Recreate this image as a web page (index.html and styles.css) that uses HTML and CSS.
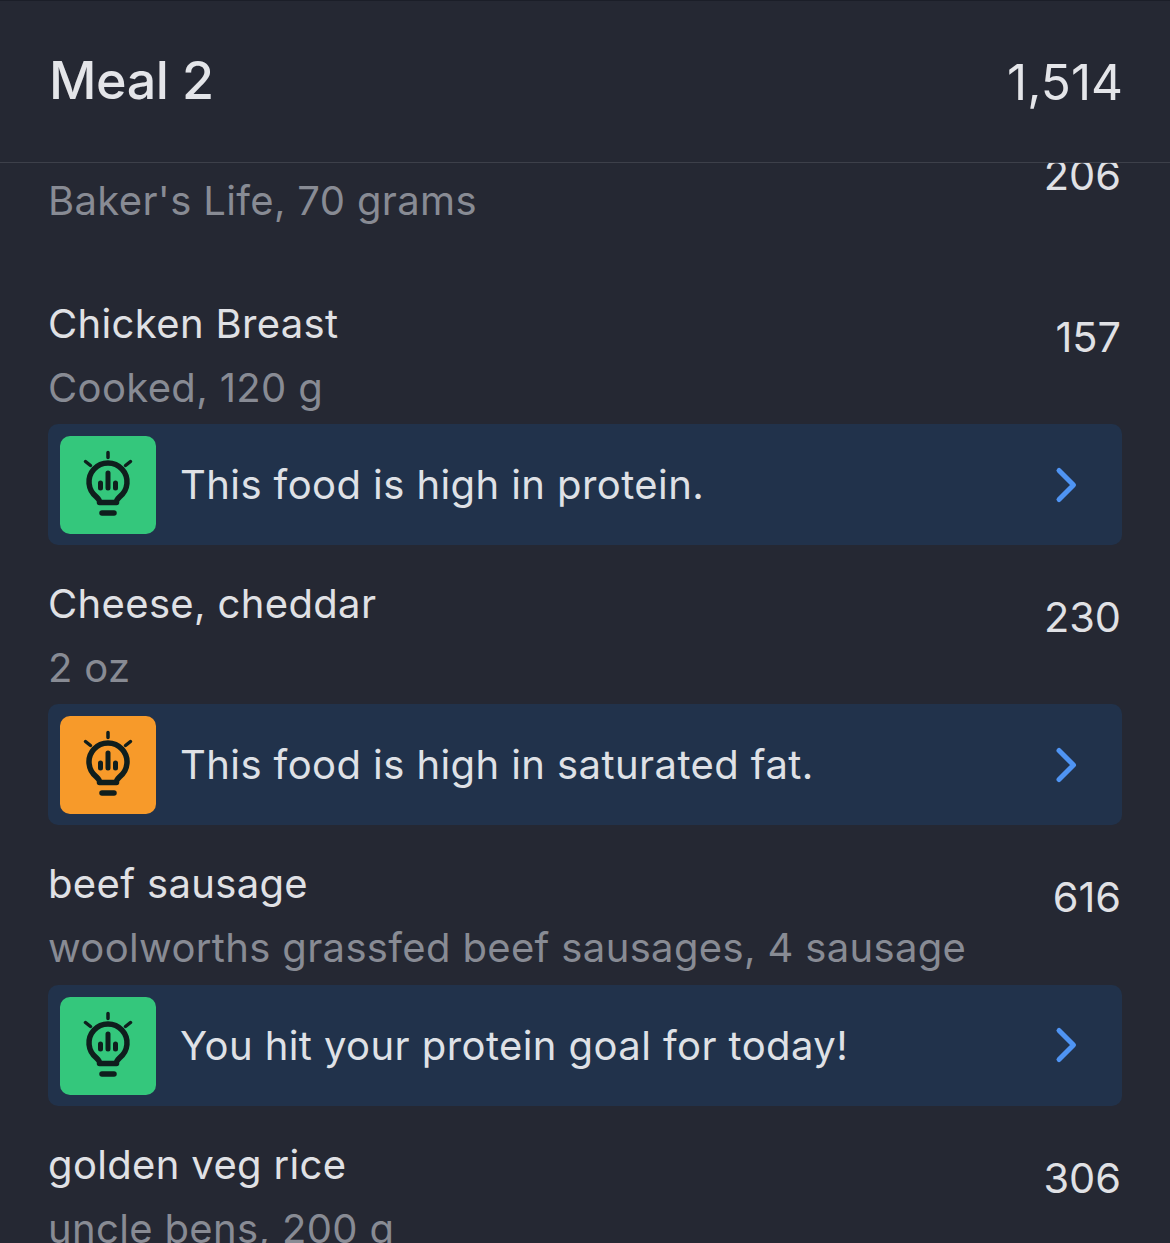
FILE: index.html
```html
<!DOCTYPE html>
<html lang="en">
<head>
  <meta charset="UTF-8" />
  <title>Meal 2</title>
  <link rel="stylesheet" href="styles.css">
</head>
<body>
  <svg class="defs" width="0" height="0">
    <symbol id="bulb" viewBox="0 0 96 98">
      <g fill="none" stroke="#0f1e1d" stroke-linecap="round" stroke-linejoin="round">
        <path stroke-width="3.500" d="M48 16.500v5M25.500 25.500l5 4M70.500 25.500l-5 4" />
        <path stroke-width="5.500" d="M39.500 66.500v-1c0-1.500-1-2.500-3-4.500a19 19 0 1 1 23 0c-2 2-3 3-3 4.500v1z" />
        <path stroke-width="5" d="M48 37v15M40.500 47v5M55.500 47v5" />
        <path stroke-width="5.500" d="M42 77h12" />
      </g>
    </symbol>
  </svg>

  <header class="meal-header">
    <h1>Meal 2</h1>
    <span class="meal-total">1,514</span>
  </header>

  <main class="food-list">
    <section class="food-first">
      <p class="food-detail">Baker's Life, 70 grams</p>
      <span class="food-cals">206</span>
    </section>

    <section class="food">
      <div class="food-row">
        <div>
          <p class="food-name">Chicken Breast</p>
          <p class="food-detail">Cooked, 120 g</p>
        </div>
        <span class="food-cals">157</span>
      </div>
      <div class="tip">
        <span class="tip-icon green"><svg width="96" height="98"><use href="#bulb" /></svg></span>
        <span class="tip-text">This food is high in protein.</span>
        <svg class="tip-arrow" width="24" height="38" viewBox="0 0 24 38"><path d="M5 4.500L19.500 19L5 33.500" /></svg>
      </div>
    </section>

    <section class="food">
      <div class="food-row">
        <div>
          <p class="food-name">Cheese, cheddar</p>
          <p class="food-detail">2 oz</p>
        </div>
        <span class="food-cals">230</span>
      </div>
      <div class="tip">
        <span class="tip-icon orange"><svg width="96" height="98"><use href="#bulb" /></svg></span>
        <span class="tip-text">This food is high in saturated fat.</span>
        <svg class="tip-arrow" width="24" height="38" viewBox="0 0 24 38"><path d="M5 4.500L19.500 19L5 33.500" /></svg>
      </div>
    </section>

    <section class="food">
      <div class="food-row">
        <div>
          <p class="food-name">beef sausage</p>
          <p class="food-detail">woolworths grassfed beef sausages, 4 sausage</p>
        </div>
        <span class="food-cals">616</span>
      </div>
      <div class="tip">
        <span class="tip-icon green"><svg width="96" height="98"><use href="#bulb" /></svg></span>
        <span class="tip-text">You hit your protein goal for today!</span>
        <svg class="tip-arrow" width="24" height="38" viewBox="0 0 24 38"><path d="M5 4.500L19.500 19L5 33.500" /></svg>
      </div>
    </section>

    <section class="food">
      <div class="food-row">
        <div>
          <p class="food-name">golden veg rice</p>
          <p class="food-detail">uncle bens, 200 g</p>
        </div>
        <span class="food-cals">306</span>
      </div>
    </section>
  </main>
</body>
</html>
```

FILE: styles.css
```css
html, body {
  margin: 0;
  height: 100%;
  overflow: hidden;
}

body {
  background: #252833;
  color: #e4e5e9;
  font-family: "Inter", "Liberation Sans", sans-serif;
  display: flex;
  flex-direction: column;
}

.defs {
  position: absolute;
}

.meal-header {
  flex: none;
  height: 163px;
  box-sizing: border-box;
  padding: 0 47px 0 49px;
  display: flex;
  justify-content: space-between;
  align-items: center;
  border-top: 1px solid #1b1e28;
  border-bottom: 1px solid #3d404a;
}

.meal-header h1 {
  margin: 0 0 2px;
  font-size: 52px;
  font-weight: 520;
  letter-spacing: -0.4px;
}

.meal-total {
  margin-top: 1px;
  font-size: 49.500px;
  font-weight: 400;
}

.food-list {
  flex: 1;
  min-height: 0;
  overflow: hidden;
  padding: 0 48px;
}

/* first row is scrolled most of the way under the header */
.food-first {
  height: 128.600px;
  padding-top: 6px;
  box-sizing: border-box;
  display: flex;
  justify-content: space-between;
  align-items: flex-start;
}

.food-first .food-cals {
  margin-top: -19px;
}

.food {
  height: 280.400px;
  box-sizing: border-box;
}

.food-row {
  display: flex;
  justify-content: space-between;
  align-items: flex-start;
  height: 127px;
  margin-bottom: 5.500px;
}

.food-name,
.food-detail {
  margin: 0;
  font-size: 40px;
  letter-spacing: 0.35px;
}

.food-name {
  line-height: 64px;
  color: #e0e1e5;
}

.food-detail {
  line-height: 63px;
  color: #888b94;
}

.food-cals {
  margin-top: 20px;
  margin-right: 1px;
  font-size: 41.500px;
  color: #e0e1e5;
}

.tip {
  height: 121px;
  box-sizing: border-box;
  background: #21324b;
  border-radius: 10px;
  padding: 0 44px 0 12px;
  display: flex;
  align-items: center;
}

.tip-icon {
  width: 96px;
  height: 98px;
  margin-top: 1px;
  border-radius: 10px;
  flex: none;
}

.tip-icon svg {
  display: block;
}

.green {
  background: #34c77c;
}

.orange {
  background: #f79a2a;
}

.tip-text {
  flex: 1;
  margin-left: 24px;
  font-size: 40px;
  letter-spacing: 0.42px;
  color: #dfe1e6;
}

.tip-arrow path {
  fill: none;
  stroke: #4f94f3;
  stroke-width: 5;
  stroke-linecap: round;
  stroke-linejoin: round;
}
```
